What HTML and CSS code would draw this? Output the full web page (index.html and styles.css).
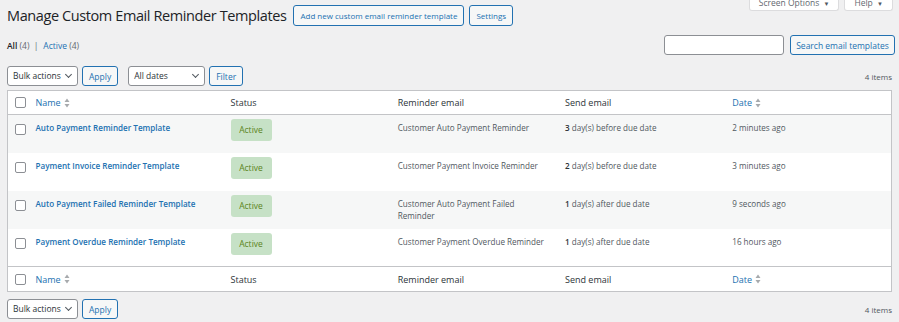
FILE: index.html
```html
<!DOCTYPE html>
<html lang="en">
<head>
    <meta charset="UTF-8" />
    <meta name="viewport" content="width=device-width, initial-scale=1.0"/>
    <title>Manage Custom Email Reminder Templates</title>
    <link rel="stylesheet" href="styles.css">
</head>
<body>
    <div class="wrap">
        <div class="cabecera">
            <div class="titulo-grupo">
                <h1>Manage Custom Email Reminder Templates</h1>
                <a class="boton-titulo" href="#">Add new custom email reminder template</a>
                <a class="boton-titulo" href="#">Settings</a>
            </div>
            <div class="pestanas">
                <button class="pestana">Screen Options <span class="flecha">▼</span></button>
                <button class="pestana">Help <span class="flecha">▼</span></button>
            </div>
        </div>

        <div class="fila-filtros">
            <ul class="subsubsub">
                <li><a class="actual" href="#">All</a> <span class="cuenta">(4)</span> <span class="sep">|</span></li>
                <li><a href="#">Active</a> <span class="cuenta">(4)</span></li>
            </ul>
            <div class="buscador">
                <input type="search" class="campo-buscar">
                <button class="boton boton-buscar">Search email templates</button>
            </div>
        </div>

        <div class="tablenav">
            <div class="acciones">
                <div class="selector selector-bulk">Bulk actions <span class="chevron"></span></div>
                <button class="boton">Apply</button>
            </div>
            <div class="acciones">
                <div class="selector selector-fechas">All dates <span class="chevron"></span></div>
                <button class="boton">Filter</button>
            </div>
            <div class="items">4 items</div>
        </div>

        <table class="tabla">
            <thead>
                <tr>
                    <th class="col-check"><span class="casilla"></span></th>
                    <th class="col-nombre"><a href="#">Name <span class="orden"></span></a></th>
                    <th>Status</th>
                    <th>Reminder email</th>
                    <th>Send email</th>
                    <th><a href="#">Date <span class="orden"></span></a></th>
                </tr>
            </thead>
            <tbody id="filas"></tbody>
            <tfoot>
                <tr>
                    <th class="col-check"><span class="casilla"></span></th>
                    <th><a href="#">Name <span class="orden"></span></a></th>
                    <th>Status</th>
                    <th>Reminder email</th>
                    <th>Send email</th>
                    <th><a href="#">Date <span class="orden"></span></a></th>
                </tr>
            </tfoot>
        </table>

        <div class="tablenav tablenav-abajo">
            <div class="acciones">
                <div class="selector selector-bulk">Bulk actions <span class="chevron"></span></div>
                <button class="boton">Apply</button>
            </div>
            <div class="items">4 items</div>
        </div>
    </div>

    <script>
        const plantillas = [
            { nombre: 'Auto Payment Reminder Template', correo: 'Customer Auto Payment Reminder', dias: 3, cuando: 'before', fecha: '2 minutes ago' },
            { nombre: 'Payment Invoice Reminder Template', correo: 'Customer Payment Invoice Reminder', dias: 2, cuando: 'before', fecha: '3 minutes ago' },
            { nombre: 'Auto Payment Failed Reminder Template', correo: 'Customer Auto Payment Failed Reminder', dias: 1, cuando: 'after', fecha: '9 seconds ago' },
            { nombre: 'Payment Overdue Reminder Template', correo: 'Customer Payment Overdue Reminder', dias: 1, cuando: 'after', fecha: '16 hours ago' }
        ];

        const orden = '<svg viewBox="0 0 6 10" width="6" height="10"><path d="M3 0.5 L5.5 4 H0.5 Z M3 9.5 L0.5 6 H5.5 Z" fill="#a7aaad"/></svg>';
        document.querySelectorAll('.orden').forEach(el => el.innerHTML = orden);

        document.getElementById('filas').innerHTML = plantillas.map(p => `
            <tr>
                <td class="col-check"><span class="casilla"></span></td>
                <td><a class="nombre" href="#">${p.nombre}</a></td>
                <td><span class="estado">Active</span></td>
                <td>${p.correo}</td>
                <td><strong>${p.dias}</strong> day(s) ${p.cuando} due date</td>
                <td>${p.fecha}</td>
            </tr>
        `).join('');
    </script>
</body>
</html>
```

FILE: styles.css
```css
* {
    margin: 0;
    padding: 0;
    box-sizing: border-box;
}

body {
    font-family: "Open Sans", Arial, sans-serif;
    background: #f0f0f1;
    color: #3c434a;
    font-size: 8.5px;
}

a {
    color: #2271b1;
    text-decoration: none;
}

.wrap {
    padding: 0 7px;
}

.cabecera {
    display: flex;
    justify-content: space-between;
    padding-top: 5px;
}

.titulo-grupo {
    display: flex;
    align-items: center;
    gap: 5px;
}

h1 {
    font-size: 14.5px;
    font-weight: 400;
    letter-spacing: -0.4px;
    color: #1d2327;
    line-height: 21px;
    margin-right: 2px;
}

.boton-titulo {
    display: inline-block;
    height: 21px;
    line-height: 19px;
    padding: 0 6px;
    font-size: 8px;
    border: 1px solid #2271b1;
    border-radius: 3px;
    background: #f6f7f7;
}

.pestanas {
    display: flex;
    gap: 5px;
    margin-top: -12px;
    margin-right: -1px;
}

.pestana {
    height: 18px;
    padding: 2px 9px 0;
    font-family: inherit;
    font-size: 8.5px;
    color: #646970;
    background: #ffffff;
    border: 1px solid #dcdcde;
    border-top: none;
    border-radius: 0 0 3px 3px;
}

.flecha {
    font-size: 6px;
    margin-left: 2px;
    color: #50575e;
}

.fila-filtros {
    display: flex;
    justify-content: space-between;
    align-items: center;
    margin-top: 9px;
}

.subsubsub {
    list-style: none;
    display: flex;
    gap: 3px;
    color: #646970;
    font-size: 8.5px;
}

.subsubsub .actual {
    color: #1d2327;
    font-weight: 600;
}

.sep {
    margin: 0 2px;
}

.buscador {
    display: flex;
    gap: 6px;
    margin-right: -3px;
}

.campo-buscar {
    width: 120px;
    height: 20px;
    border: 1px solid #8c8f94;
    border-radius: 3px;
    background: #ffffff;
}

.boton {
    height: 20px;
    padding: 0 6px;
    font-family: inherit;
    font-size: 8.5px;
    color: #2271b1;
    background: #f6f7f7;
    border: 1px solid #2271b1;
    border-radius: 3px;
}

.boton-buscar {
    width: 105px;
    padding: 0;
}

.tablenav {
    display: flex;
    align-items: center;
    gap: 10px;
    margin-top: 11px;
    height: 20px;
}

.acciones {
    display: flex;
    gap: 4px;
}

.selector {
    height: 20px;
    line-height: 18px;
    padding: 0 5px;
    font-size: 8.5px;
    color: #2c3338;
    background: #ffffff;
    border: 1px solid #8c8f94;
    border-radius: 3px;
    display: flex;
    justify-content: space-between;
    align-items: center;
}

.selector-bulk { width: 71px; }
.selector-fechas { width: 77px; }

.chevron {
    width: 5px;
    height: 5px;
    border-right: 1px solid #50575e;
    border-bottom: 1px solid #50575e;
    transform: rotate(45deg);
    margin-top: -3px;
    margin-right: 1px;
}

.items {
    margin-left: auto;
    color: #50575e;
    font-size: 8px;
}

.tabla {
    width: 100%;
    margin-top: 4px;
    border-collapse: collapse;
    table-layout: fixed;
    background: #ffffff;
    border: 1px solid #c3c4c7;
}

.tabla th {
    height: 24px;
    padding: 0 8px;
    text-align: left;
    font-weight: 400;
    font-size: 9px;
    color: #2c3338;
}

.tabla thead th { border-bottom: 1px solid #c3c4c7; }
.tabla tfoot th { border-top: 1px solid #c3c4c7; height: 25px; }

.tabla th a {
    display: inline-flex;
    align-items: center;
    gap: 3px;
}

.orden svg {
    display: block;
}

.tabla .col-check {
    width: 20px;
    padding: 0 0 0 7px;
}

.col-nombre {
    width: 195px;
}

.casilla {
    display: block;
    width: 11px;
    height: 11px;
    border: 1px solid #8c8f94;
    border-radius: 2px;
    background: #ffffff;
}

.tabla tbody tr {
    height: 38px;
}

.tabla tbody tr:nth-child(odd) {
    background: #f6f7f7;
}

.tabla td {
    vertical-align: top;
    padding: 7px 8px;
    line-height: 12px;
    font-size: 8.1px;
    color: #50575e;
}

.tabla td.col-check {
    padding-top: 9px;
}

.tabla td strong {
    font-weight: 600;
    color: #2c3338;
}

.nombre {
    font-weight: 600;
}

.estado {
    display: inline-block;
    width: 41px;
    height: 22px;
    line-height: 22px;
    margin-top: -3px;
    text-align: center;
    font-size: 8.5px;
    border-radius: 3px;
    background: #c6e1c6;
    color: #5b841b;
}

.tablenav-abajo {
    margin-top: 7px;
}
```
